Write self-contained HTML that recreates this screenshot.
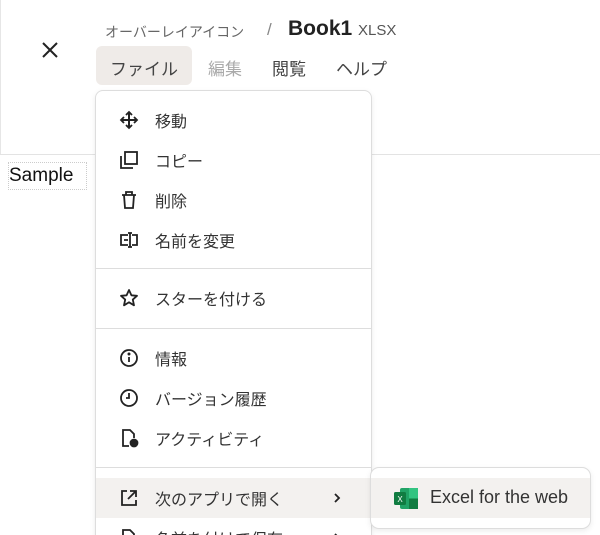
<!DOCTYPE html><html style="overflow:hidden"><head><meta charset="utf-8"><style>
html,body{margin:0;width:600px;height:535px;overflow:hidden}
body{background:#fff;font-family:"Liberation Sans","Noto Sans CJK JP",sans-serif;color:#222;position:relative}
.a{position:absolute}
.it{position:absolute;left:0;width:275px;height:40px;font-size:16px;color:#333}
.it svg{position:absolute;left:23px;top:10px}
.it span{position:absolute;left:59px;top:8px}
.dv{position:absolute;left:0;width:275px;border-top:1px solid #ddd}
.ch{left:236px!important;top:14px!important}
</style></head><body>
<div class="a" style="left:0;top:0;width:1px;height:154px;background:#e6e6e6"></div>
<div class="a" style="left:0;top:154px;width:600px;height:1px;background:#e3e3e3"></div>
<svg class="a" style="left:41px;top:41px" width="18" height="18" viewBox="0 0 18 18"><path d="M2 2L16 16M16 2L2 16" stroke="#222" stroke-width="2"/></svg>
<div class="a" style="left:105px;top:22px;font-size:14px;color:#666">オーバーレイアイコン</div>
<div class="a" style="left:267px;top:20px;font-size:17px;color:#888">/</div>
<div class="a" style="left:288px;top:17px;font-size:21px;font-weight:bold;color:#222">Book1</div>
<div class="a" style="left:358px;top:22px;font-size:15px;color:#555">XLSX</div>
<div class="a" style="left:96px;top:46px;width:96px;height:39px;background:#efebe8;border-radius:6px"></div>
<div class="a" style="left:110px;top:55px;font-size:17px;color:#444">ファイル</div>
<div class="a" style="left:208px;top:55px;font-size:17px;color:#aaa">編集</div>
<div class="a" style="left:272px;top:55px;font-size:17px;color:#444">閲覧</div>
<div class="a" style="left:336px;top:55px;font-size:17px;color:#444">ヘルプ</div>
<div class="a" style="left:8px;top:162px;width:77px;height:26px;border:1px dotted #ccc"></div>
<div class="a" style="left:9px;top:165px;font-size:19px;color:#111">Sample</div>
<div class="a" style="left:95px;top:90px;width:275px;height:460px;border:1px solid #ddd;border-radius:8px;background:#fff;box-shadow:0 2px 6px rgba(0,0,0,.08);overflow:hidden">
<div class="it" style="top:9px"><svg width="20" height="20" viewBox="0 0 20 20" fill="none" stroke="#222" stroke-width="2"><path d="M10 2V18M2 10H18"/><path d="M7 5L10 2L13 5M7 15L10 18L13 15M5 7L2 10L5 13M15 7L18 10L15 13" stroke-width="1.8"/></svg><span>移動</span></div>
<div class="it" style="top:49px"><svg width="20" height="20" viewBox="0 0 20 20" fill="none" stroke="#222" stroke-width="1.8"><rect x="6" y="2" width="12" height="12"/><path d="M2 6V18H14"/></svg><span>コピー</span></div>
<div class="it" style="top:89px"><svg width="20" height="20" viewBox="0 0 20 20" fill="none" stroke="#222" stroke-width="1.8"><path d="M3 5H17M7 5V2H13V5M5 5L6 18H14L15 5"/></svg><span>削除</span></div>
<div class="it" style="top:129px"><svg width="20" height="20" viewBox="0 0 20 20" fill="none" stroke="#222" stroke-width="1.8"><path d="M9 5H2V15H9M13 5H18V15H13M11 3V17M9 3H13M9 17H13M5 10H9"/></svg><span>名前を変更</span></div>
<div class="dv" style="top:177px"></div>
<div class="it" style="top:187px"><svg width="20" height="20" viewBox="0 0 20 20" fill="none" stroke="#222" stroke-width="1.8"><path d="M10 2L12.4 7.3L18 7.8L13.8 11.6L15 17.3L10 14.3L5 17.3L6.2 11.6L2 7.8L7.6 7.3Z" stroke-linejoin="round"/></svg><span>スターを付ける</span></div>
<div class="dv" style="top:237px"></div>
<div class="it" style="top:247px"><svg width="20" height="20" viewBox="0 0 20 20" fill="none" stroke="#222" stroke-width="1.8"><circle cx="10" cy="10" r="8"/><path d="M10 9V14"/><circle cx="10" cy="6" r=".6" fill="#222"/></svg><span>情報</span></div>
<div class="it" style="top:287px"><svg width="20" height="20" viewBox="0 0 20 20" fill="none" stroke="#222" stroke-width="1.8"><circle cx="10" cy="10" r="8"/><path d="M10 5V10H7"/></svg><span>バージョン履歴</span></div>
<div class="it" style="top:327px"><svg width="20" height="20" viewBox="0 0 20 20" fill="none" stroke="#222" stroke-width="1.8"><path d="M10 18H4V2H11L15 6V10"/><circle cx="15" cy="15" r="3.5" fill="#222"/></svg><span>アクティビティ</span></div>
<div class="dv" style="top:376px"></div>
<div class="it" style="top:387px;background:#f3f1ef"><svg width="20" height="20" viewBox="0 0 20 20" fill="none" stroke="#222" stroke-width="1.8"><path d="M8 3H3V17H17V12M11 3H17V9M17 3L9 11"/></svg><span>次のアプリで開く</span><svg class="ch" width="10" height="12" viewBox="0 0 10 12" fill="none" stroke="#222" stroke-width="1.8"><path d="M3 2L7 6L3 10"/></svg></div>
<div class="it" style="top:427px"><svg width="20" height="20" viewBox="0 0 20 20" fill="none" stroke="#222" stroke-width="1.8"><path d="M10 18H4V2H11L15 6V10M12 14H18"/></svg><span>名前を付けて保存</span><svg class="ch" width="10" height="12" viewBox="0 0 10 12" fill="none" stroke="#222" stroke-width="1.8"><path d="M3 2L7 6L3 10"/></svg></div>
</div>
<div class="a" style="left:370px;top:467px;width:219px;height:60px;border:1px solid #ddd;border-radius:9px;background:#fff;box-shadow:0 2px 6px rgba(0,0,0,.08);overflow:hidden">
<div class="a" style="left:0;top:10px;width:219px;height:40px;background:#f3f1ef"></div>
<svg class="a" style="left:23px;top:20px" width="24" height="21" viewBox="0 0 24 21"><rect x="6" y="0" width="18" height="21" rx="2" fill="#21a366"/><rect x="15" y="0" width="9" height="10.5" fill="#33c481"/><rect x="15" y="10.5" width="9" height="10.5" fill="#107c41"/><rect x="0" y="4" width="12" height="13" rx="1.5" fill="#107c41"/><text x="6" y="14" font-size="8" fill="#fff" text-anchor="middle" font-family="Liberation Sans">X</text></svg>
<div class="a" style="left:59px;top:19px;font-size:18px;color:#333">Excel for the web</div>
</div>
</body></html>
